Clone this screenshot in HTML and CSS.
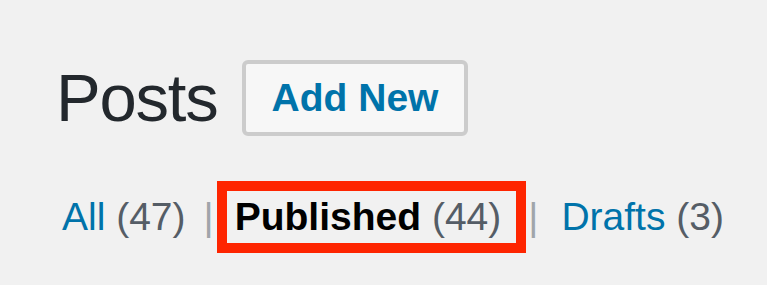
FILE: index.html
```html
<!DOCTYPE html>
<html lang="en">
<head>
<meta charset="utf-8">
<title>Posts</title>
<link rel="stylesheet" href="styles.css">
</head>
<body>
<div class="wrap">
  <div class="header">
    <h1 class="title">Posts</h1>
    <a class="add-new" href="#">Add New</a>
  </div>
  <ul class="subsubsub">
    <li class="item"><a class="link" href="#">All <span class="count">(47)</span></a></li>
    <li class="sep sep-1">|</li>
    <li class="item current-box"><a class="link current" href="#">Published <span class="count">(44)</span></a></li>
    <li class="sep sep-2">|</li>
    <li class="item item-last"><a class="link" href="#">Drafts <span class="count">(3)</span></a></li>
  </ul>
</div>
</body>
</html>
```

FILE: styles.css
```css
html, body {
  margin: 0;
  padding: 0;
  background: #f1f1f1;
}

body {
  width: 767px;
  height: 285px;
  overflow: hidden;
  font-family: "Liberation Sans", Arial, Helvetica, sans-serif;
}

.wrap {
  padding: 60px 0 0 56px;
}

.header {
  display: flex;
  align-items: center;
}

.title {
  margin: 0;
  font-size: 67px;
  font-weight: 400;
  line-height: 76px;
  letter-spacing: -1.2px;
  color: #23282d;
}

.add-new {
  margin-left: 24px;
  height: 68px;
  line-height: 68px;
  padding: 0 26px 0 26px;
  border: 4px solid #cccccc;
  border-radius: 6px;
  background: #f7f7f7;
  color: #0073aa;
  font-size: 39px;
  font-weight: 700;
  text-decoration: none;
}

.subsubsub {
  list-style: none;
  margin: 45px 0 0 6px;
  padding: 0;
  display: flex;
  align-items: center;
  font-size: 39px;
  line-height: 52px;
}

.link {
  color: #0073aa;
  text-decoration: none;
}

.count {
  color: #555d66;
  font-weight: 400;
}

.current {
  color: #000000;
  font-weight: 700;
}

.sep {
  color: #a0a5aa;
}

.sep-1 {
  margin: 0 3px 0 18px;
}

.current-box {
  border: 10px solid #fe2500;
  padding: 0 15px 0 8px;
}

.sep-2 {
  margin: 0 23px 0 2px;
}
```
